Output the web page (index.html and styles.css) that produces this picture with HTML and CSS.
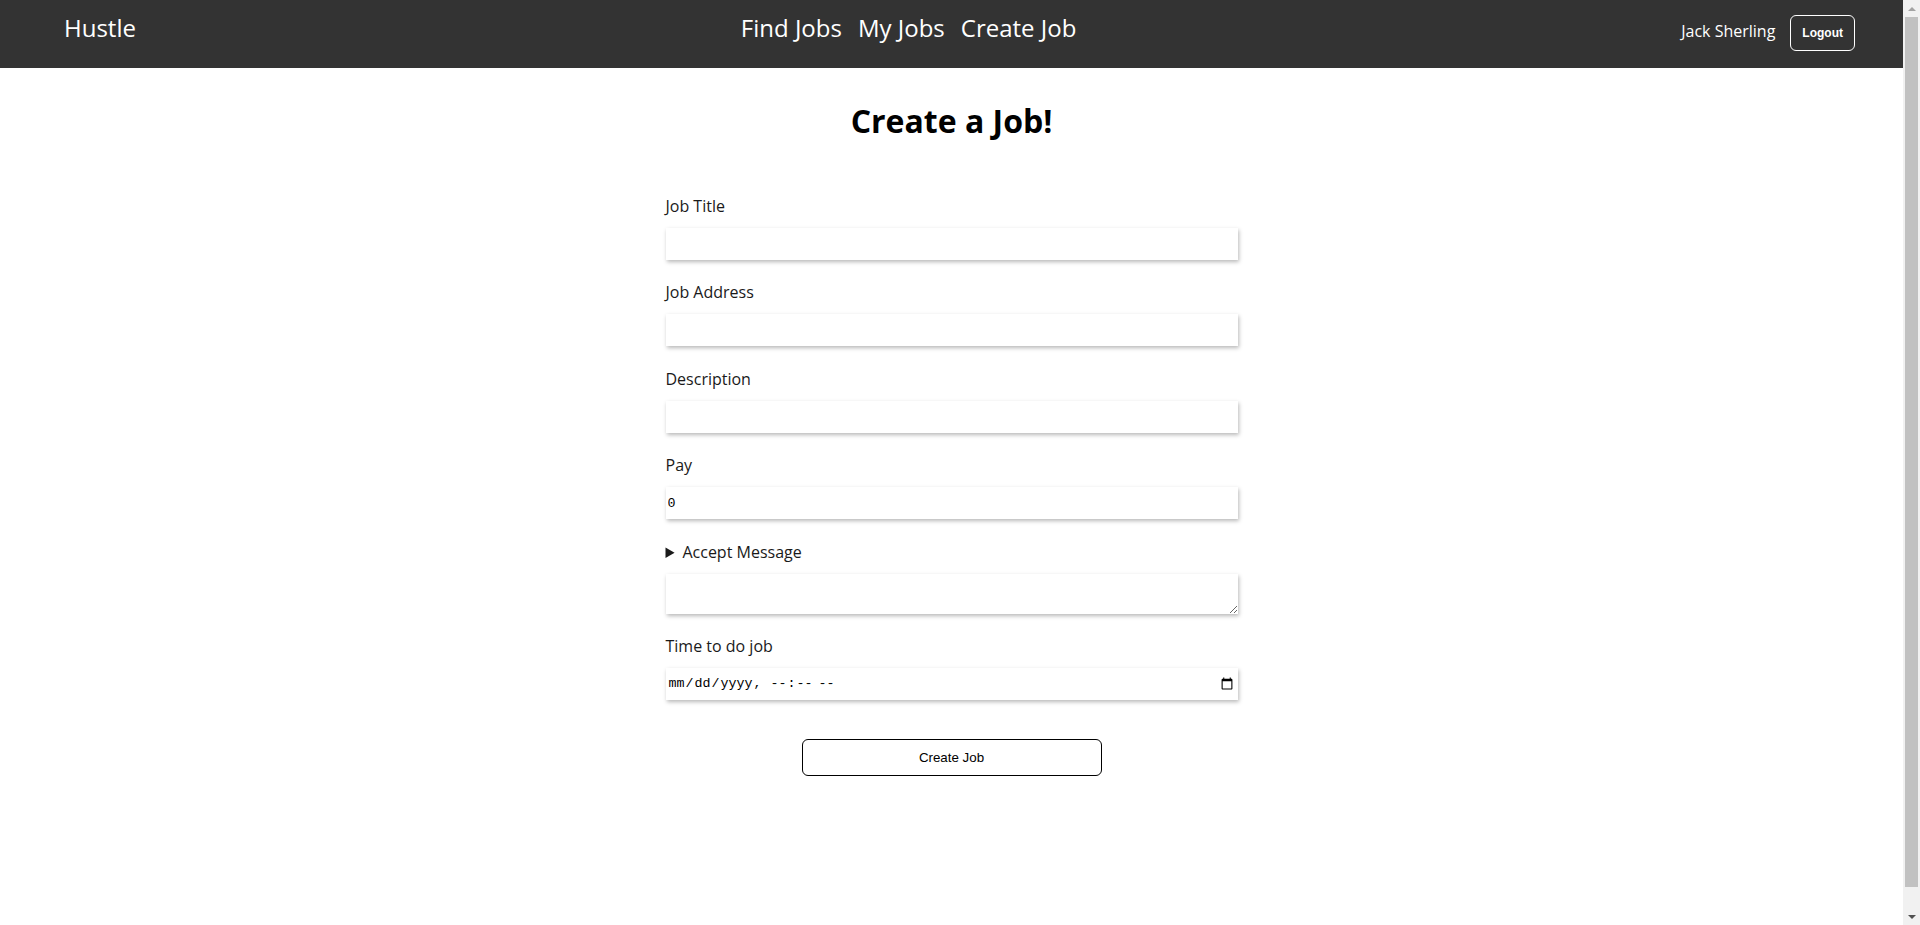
FILE: index.html
```html
<!DOCTYPE html>
<html lang="en">
<head>
<meta charset="utf-8">
<title>Hustle - Create Job</title>
<link rel="stylesheet" href="styles.css">
</head>
<body>
<div class="app">
  <nav class="navbar">
    <a class="brand" href="#">Hustle</a>
    <div class="nav-links">
      <a href="#">Find Jobs</a>
      <a href="#">My Jobs</a>
      <a href="#">Create Job</a>
    </div>
    <div class="nav-user">
      <span class="user-name">Jack Sherling</span>
      <button class="logout" type="button">Logout</button>
    </div>
  </nav>
  <main class="page">
    <h1 class="title">Create a Job!</h1>
    <form class="job-form">
      <div class="field">
        <label class="field-label" for="title">Job Title</label>
        <input class="field-input" id="title" type="text">
      </div>
      <div class="field">
        <label class="field-label" for="address">Job Address</label>
        <input class="field-input" id="address" type="text">
      </div>
      <div class="field">
        <label class="field-label" for="desc">Description</label>
        <input class="field-input" id="desc" type="text">
      </div>
      <div class="field">
        <label class="field-label" for="pay">Pay</label>
        <input class="field-input" id="pay" type="number" value="0">
      </div>
      <div class="field">
        <details class="accept">
          <summary class="accept-summary">Accept Message</summary>
        </details>
        <textarea class="field-input field-textarea"></textarea>
      </div>
      <div class="field">
        <label class="field-label" for="time">Time to do job</label>
        <input class="field-input" id="time" type="datetime-local">
      </div>
      <div class="actions">
        <button class="submit" type="submit">Create Job</button>
      </div>
    </form>
  </main>
</div>
<div class="scrollbar" aria-hidden="true">
  <span class="sb-btn sb-up"></span>
  <span class="sb-thumb"></span>
  <span class="sb-btn sb-down"></span>
</div>
</body>
</html>
```
FILE: styles.css
```css
* {
  box-sizing: border-box;
}

html {
  overflow: hidden;
}

body {
  margin: 0;
  font-family: "Open Sans", "Noto Sans", sans-serif;
  color: #000;
  background: #fff;
}

.app {
  margin-right: 17px;
}

/* browser scrollbar, drawn over the right edge */
.scrollbar {
  position: fixed;
  top: 0;
  right: 0;
  bottom: 0;
  width: 17px;
  background: #f1f1f1;
  display: flex;
  flex-direction: column;
  align-items: center;
}

.sb-btn {
  flex: none;
  width: 17px;
  height: 17px;
  display: flex;
  align-items: center;
  justify-content: center;
}

.sb-btn::before {
  content: "";
  width: 0;
  height: 0;
  border-left: 4px solid transparent;
  border-right: 4px solid transparent;
}

.sb-up::before {
  border-bottom: 4px solid #a3a3a3;
}

.sb-down {
  margin-top: auto;
}

.sb-down::before {
  border-top: 4px solid #505050;
}

.sb-thumb {
  flex: none;
  width: 13px;
  height: 870px;
  background: #c1c1c1;
}

.navbar {
  height: 68px;
  padding: 11px 48px 0 64px;
  background: #333333;
  display: flex;
  justify-content: space-between;
  align-items: baseline;
}

.brand {
  color: #fff;
  font-size: 24px;
  text-decoration: none;
}

.nav-links {
  display: flex;
  align-items: baseline;
  gap: 16px;
}

.nav-links a {
  color: #fff;
  font-size: 24px;
  text-decoration: none;
}

.nav-user {
  display: flex;
  align-items: baseline;
  gap: 15px;
}

.user-name {
  color: #fff;
  font-size: 16px;
}

.logout {
  height: 36px;
  padding: 0 11px;
  background: transparent;
  color: #fff;
  border: 1px solid #fff;
  border-radius: 6px;
  font-family: "Liberation Sans", Arial, sans-serif;
  font-size: 12px;
  font-weight: bold;
}

.page {
  padding: 31px 0 165px;
}

.title {
  margin: 0;
  text-align: center;
  font-size: 32px;
  font-weight: 700;
}

.job-form {
  width: 572px;
  margin: 51.5px auto 0;
}

.field {
  margin-bottom: 20.5px;
}

.field-label {
  display: block;
  font-size: 16px;
  line-height: 24px;
  margin-bottom: 10px;
  color: #1a1a1a;
}

.field-input {
  display: block;
  width: 100%;
  height: 32px;
  padding: 1px 2px;
  border: none;
  background: #fff;
  box-shadow: 1px 2px 4px rgba(0, 0, 0, 0.28);
  font-family: "Liberation Mono", "DejaVu Sans Mono", monospace;
  font-size: 13.333px;
  color: #000;
  outline: none;
}

.field-textarea {
  height: 40px;
  resize: both;
}

.accept {
  margin-bottom: 10px;
}

.accept-summary {
  font-size: 16px;
  line-height: 24px;
  color: #1a1a1a;
  cursor: pointer;
}

.actions {
  display: flex;
  justify-content: center;
  padding-top: 18px;
}

.submit {
  width: 300px;
  height: 37px;
  background: #fff;
  border: 1px solid #000;
  border-radius: 6px;
  font-family: "Liberation Sans", Arial, sans-serif;
  font-size: 13.333px;
  color: #000;
}
```
